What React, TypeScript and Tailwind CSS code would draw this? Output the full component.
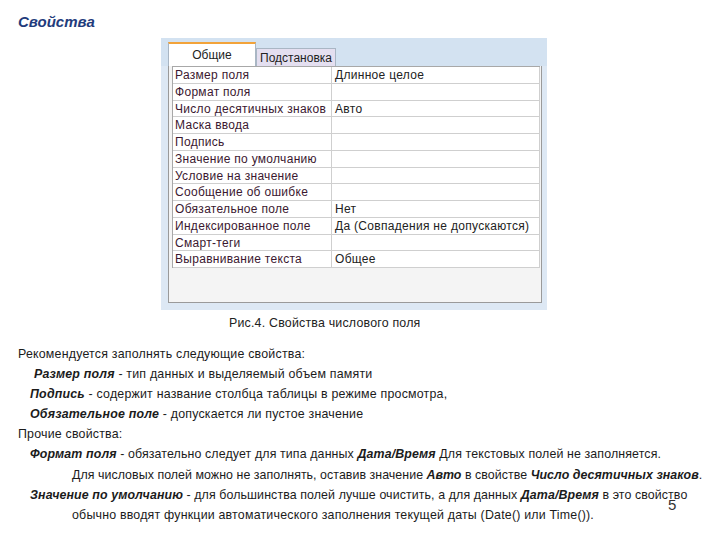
const rows: [string, string][] = [
  ['Размер поля', 'Длинное целое'],
  ['Формат поля', ''],
  ['Число десятичных знаков', 'Авто'],
  ['Маска ввода', ''],
  ['Подпись', ''],
  ['Значение по умолчанию', ''],
  ['Условие на значение', ''],
  ['Сообщение об ошибке', ''],
  ['Обязательное поле', 'Нет'],
  ['Индексированное поле', 'Да (Совпадения не допускаются)'],
  ['Смарт-теги', ''],
  ['Выравнивание текста', 'Общее'],
];

function B({ children }: { children: string }) {
  return <span className="font-bold italic">{children}</span>;
}

function PropertySheet() {
  return (
    <div className="ml-[161px] w-[386px] h-[272px] bg-[#dde8f4] flex flex-col">
      <div className="h-[28px] flex items-end pl-[7px] bg-[#d3e2f1]">
        <div className="w-[88px] h-[24px] bg-white border-t-2 border-[#f2a33a] border-x border-x-[#a9b6c4] flex items-center justify-center text-[12px] text-[#222]">
          Общие
        </div>
        <div className="w-[80px] h-[18px] bg-[#e4dff0] border border-b-0 border-[#a9b6c4] flex items-center justify-center text-[12px] text-[#222]">
          Подстановка
        </div>
      </div>
      <div className="ml-[7px] mr-[5px] h-[237px] bg-[#f4f4f4] border border-t-0 border-[#9a9a9a] pl-[3px] pr-[1px]">
        <div className="border-l border-t border-[#a8a8a8] bg-white">
          {rows.map(([k, v]) => (
            <div key={k} className="grid grid-cols-[159px_1fr] h-[16.75px] border-b border-[#cfcfcf]">
              <div className="border-r border-[#cfcfcf] pl-[2px] text-[#3b1830] leading-[16px] whitespace-nowrap overflow-hidden tracking-[0.3px]">{k}</div>
              <div className="pl-[3px] text-[#222] leading-[16px] whitespace-nowrap overflow-hidden border-r border-[#cfcfcf] tracking-[0.3px]">{v}</div>
            </div>
          ))}
        </div>
      </div>
    </div>
  );
}

export default function App() {
  return (
    <div className="relative w-[720px] h-[540px] bg-white font-['Liberation_Sans',sans-serif] text-[12px]">
      <div className="h-[38px] pl-[18px] pt-[12px] text-[15px] font-bold italic text-[#1f3c7c] leading-[20px]">
        Свойства
      </div>
      <PropertySheet />
      <div className="h-[26px] flex items-center pl-[229px] text-[12.4px] tracking-[0.2px] text-[#222]">
        Рис.4. Свойства числового поля
      </div>
      <div className="mt-[8px] flex flex-col text-[12.4px] tracking-[0.2px] text-[#1b1b1b]">
        <div className="h-[20.1px] leading-[20px] pl-[18px]">Рекомендуется заполнять следующие свойства:</div>
        <div className="h-[20.1px] leading-[20px] pl-[34px]">
          <B>Размер поля</B> - тип данных и выделяемый объем памяти
        </div>
        <div className="h-[20.1px] leading-[20px] pl-[30px]">
          <B>Подпись</B> - содержит название столбца таблицы в режиме просмотра,
        </div>
        <div className="h-[20.1px] leading-[20px] pl-[30px]">
          <B>Обязательное поле</B> - допускается ли пустое значение
        </div>
        <div className="h-[20.1px] leading-[20px] pl-[18px]">Прочие свойства:</div>
        <div className="h-[20.1px] leading-[20px] pl-[30px] whitespace-nowrap tracking-[0.12px]">
          <B>Формат поля</B> - обязательно следует для типа данных <B>Дата/Время</B> Для текстовых полей не заполняется.
        </div>
        <div className="h-[20.1px] leading-[20px] pl-[72px] whitespace-nowrap tracking-[0.05px]">
          Для числовых полей можно не заполнять, оставив значение <B>Авто</B> в свойстве <B>Число десятичных знаков</B>.
        </div>
        <div className="h-[20.1px] leading-[20px] pl-[30px] whitespace-nowrap tracking-[0.1px]">
          <B>Значение по умолчанию</B> - для большинства полей лучше очистить, а для данных <B>Дата/Время</B> в это свойство
        </div>
        <div className="h-[20.1px] leading-[20px] pl-[72px] whitespace-nowrap">
          обычно вводят функции автоматического заполнения текущей даты (Date() или Time()).
        </div>
      </div>
      <div className="absolute left-[668px] top-[497px] text-[15px] leading-none text-[#333]">5</div>
    </div>
  );
}
